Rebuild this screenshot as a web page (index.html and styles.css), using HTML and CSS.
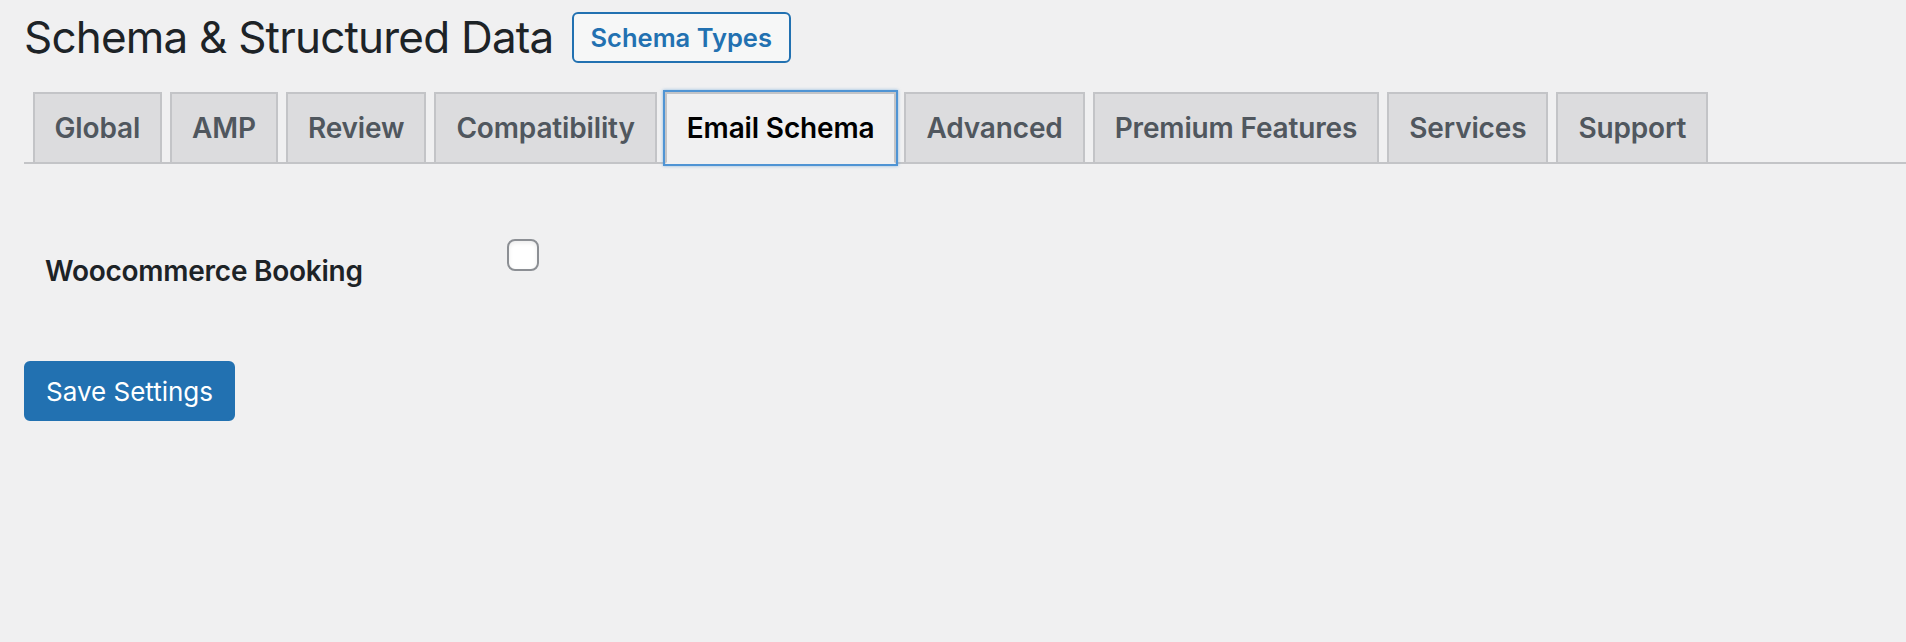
FILE: index.html
```html
<!DOCTYPE html>
<html lang="en">
<head>
  <meta charset="UTF-8">
  <title>Schema &amp; Structured Data</title>
  <link rel="stylesheet" href="styles.css">
</head>
<body>
  <div class="wrap">
    <div class="page-head">
      <h1>Schema &amp; Structured Data</h1>
      <a href="#" class="page-title-action">Schema Types</a>
    </div>

    <nav class="nav-tab-wrapper">
      <a href="#" class="nav-tab">Global</a>
      <a href="#" class="nav-tab">AMP</a>
      <a href="#" class="nav-tab">Review</a>
      <a href="#" class="nav-tab">Compatibility</a>
      <a href="#" class="nav-tab nav-tab-active">Email Schema</a>
      <a href="#" class="nav-tab">Advanced</a>
      <a href="#" class="nav-tab">Premium Features</a>
      <a href="#" class="nav-tab">Services</a>
      <a href="#" class="nav-tab">Support</a>
    </nav>

    <form class="settings-form" onsubmit="return false;">
      <div class="form-row">
        <label class="form-label" for="wooBooking">Woocommerce Booking</label>
        <input type="checkbox" id="wooBooking" class="form-check">
      </div>
      <button type="submit" class="button-primary">Save Settings</button>
    </form>
  </div>
</body>
</html>
```

FILE: styles.css
```css
body {
  margin: 0;
  background-color: #f0f0f1;
  font-family: Inter, "Liberation Sans", sans-serif;
  color: #1d2327;
}

.wrap {
  padding-left: 24px;
}

.page-head {
  display: flex;
  align-items: center;
  gap: 18px;
  padding-top: 7px;
}

h1 {
  margin: 0;
  font-size: 44px;
  font-weight: 400;
  letter-spacing: -0.8px;
  line-height: 60px;
  color: #1d2327;
}

.page-title-action {
  display: inline-block;
  height: 51px;
  box-sizing: border-box;
  padding: 0 17px;
  line-height: 47px;
  font-size: 25.5px;
  font-weight: 600;
  color: #2271b1;
  text-decoration: none;
  background-color: #f6f7f7;
  border: 2px solid #2271b1;
  border-radius: 6px;
}

.nav-tab-wrapper {
  display: flex;
  align-items: flex-end;
  gap: 8px;
  margin-top: 25px;
  padding-left: 8.5px;
  border-bottom: 2px solid #c3c4c7;
}

.nav-tab {
  padding: 10px 20px;
  font-size: 28px;
  font-weight: 600;
  letter-spacing: -0.15px;
  line-height: 48px;
  color: #50575e;
  text-decoration: none;
  white-space: nowrap;
  background-color: #dcdcde;
  border: 2px solid #c3c4c7;
  border-bottom: none;
}

.nav-tab-active {
  color: #000;
  background-color: #f0f0f1;
  border-bottom: 2px solid #f0f0f1;
  margin-bottom: -2px;
  box-shadow: 0 0 0 2px #4f94d4, 0 0 3px 2px rgba(79, 148, 212, 0.6);
}

.settings-form {
  padding-top: 75px;
}

.form-row {
  display: flex;
  align-items: flex-start;
}

.form-label {
  width: 483px;
  box-sizing: border-box;
  padding-left: 21px;
  margin-top: 14px;
  font-size: 28px;
  font-weight: 600;
  letter-spacing: -0.25px;
  line-height: 36px;
}

.form-check {
  appearance: none;
  -webkit-appearance: none;
  width: 32px;
  height: 32px;
  margin: 0;
  background-color: #fff;
  border: 2px solid #8c8f94;
  border-radius: 8px;
  box-shadow: inset 0 2px 4px rgba(0, 0, 0, 0.08);
}

.button-primary {
  margin-top: 72px;
  height: 60px;
  padding: 0 20px;
  font-family: inherit;
  font-size: 26px;
  color: #fff;
  background-color: #2271b1;
  border: 2px solid #2271b1;
  border-radius: 6px;
  cursor: pointer;
}
```
